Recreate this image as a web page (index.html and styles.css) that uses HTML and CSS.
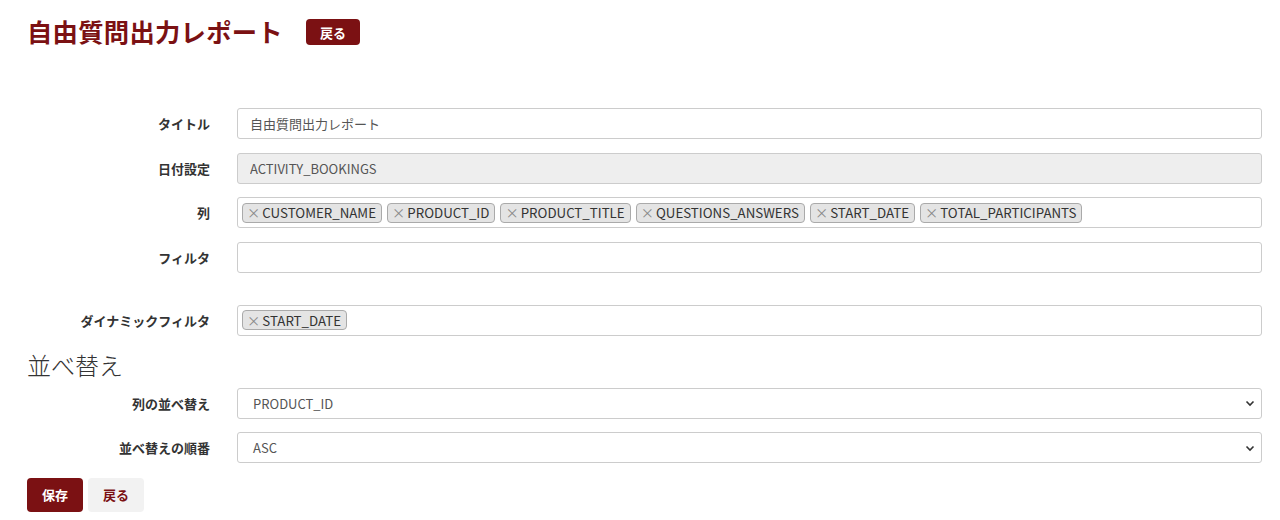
FILE: index.html
```html
<!DOCTYPE html>
<html>
  <head>
    <meta charset="utf-8">
    <title>自由質問出力レポート</title>
    <link rel="stylesheet" href="styles.css">
  </head>
  <body>
    <div class="page">
      <div class="page-header">
        <h1>自由質問出力レポート</h1>
        <a class="btn btn-primary btn-sm" href="#">戻る</a>
      </div>

      <form class="report-form">
        <div class="form-row">
          <label>タイトル</label>
          <input type="text" class="form-control" value="自由質問出力レポート">
        </div>
        <div class="form-row">
          <label>日付設定</label>
          <input type="text" class="form-control" value="ACTIVITY_BOOKINGS" disabled>
        </div>
        <div class="form-row">
          <label>列</label>
          <div class="form-control tag-box">
            <span class="tag"><span class="tag-x">×</span>CUSTOMER_NAME</span>
            <span class="tag"><span class="tag-x">×</span>PRODUCT_ID</span>
            <span class="tag"><span class="tag-x">×</span>PRODUCT_TITLE</span>
            <span class="tag"><span class="tag-x">×</span>QUESTIONS_ANSWERS</span>
            <span class="tag"><span class="tag-x">×</span>START_DATE</span>
            <span class="tag"><span class="tag-x">×</span>TOTAL_PARTICIPANTS</span>
          </div>
        </div>
        <div class="form-row">
          <label>フィルタ</label>
          <div class="form-control tag-box"></div>
        </div>
        <div class="form-row spaced">
          <label>ダイナミックフィルタ</label>
          <div class="form-control tag-box">
            <span class="tag"><span class="tag-x">×</span>START_DATE</span>
          </div>
        </div>

        <h2>並べ替え</h2>

        <div class="form-row">
          <label>列の並べ替え</label>
          <div class="form-control select-box">
            <span>PRODUCT_ID</span>
            <svg width="10" height="8" viewBox="0 0 10 8"><path d="M1.5 2.5 5 6 8.5 2.5" fill="none" stroke="#333" stroke-width="1.6"/></svg>
          </div>
        </div>
        <div class="form-row">
          <label>並べ替えの順番</label>
          <div class="form-control select-box">
            <span>ASC</span>
            <svg width="10" height="8" viewBox="0 0 10 8"><path d="M1.5 2.5 5 6 8.5 2.5" fill="none" stroke="#333" stroke-width="1.6"/></svg>
          </div>
        </div>

        <div class="actions">
          <button type="button" class="btn btn-primary">保存</button>
          <button type="button" class="btn btn-light">戻る</button>
        </div>
      </form>
    </div>
  </body>
</html>
```

FILE: styles.css
```css
body {
  margin: 0;
  font-family: "Noto Sans CJK JP", "Open Sans", sans-serif;
  font-size: 13px;
  color: #333;
  background: #fff;
}
.page {
  padding: 14px 18px 0 27px;
}
.page-header {
  display: flex;
  align-items: center;
  gap: 23px;
  height: 34px;
}
h1 {
  margin: 0;
  font-size: 25.3px;
  font-weight: bold;
  color: #7b1113;
  letter-spacing: 0.3px;
}
.btn {
  display: inline-flex;
  align-items: center;
  justify-content: center;
  border: none;
  border-radius: 4px;
  font-family: inherit;
  font-weight: bold;
  text-decoration: none;
  cursor: pointer;
}
.btn-primary {
  background: #7b1113;
  color: #fff;
}
.btn-light {
  background: #f2f2f2;
  color: #7b1113;
}
.btn-sm {
  width: 54px;
  height: 26px;
  font-size: 13px;
  margin-top: 2px;
}
.report-form {
  margin-top: 60px;
}
.form-row {
  display: grid;
  grid-template-columns: 183px 1fr;
  column-gap: 27px;
  align-items: center;
  margin-bottom: 13.5px;
}
.form-row.spaced {
  margin-top: 32px;
  margin-bottom: 0;
}
.form-row label {
  text-align: right;
  font-weight: bold;
  color: #333;
}
.form-control {
  box-sizing: border-box;
  height: 31px;
  border: 1px solid #ccc;
  border-radius: 3px;
  padding: 0 12px;
  font-family: inherit;
  font-size: 13px;
  color: #555;
  background: #fff;
  width: 100%;
}
.form-control:disabled {
  background: #eee;
  color: #555;
}
.tag-box {
  display: flex;
  align-items: center;
  gap: 5px;
  padding: 0 4px;
}
.tag {
  display: inline-flex;
  align-items: center;
  height: 20px;
  box-sizing: border-box;
  padding: 0 5px 0 4px;
  background: #e4e4e4;
  border: 1px solid #aaa;
  border-radius: 4px;
  font-size: 13.3px;
  color: #333;
}
.tag-x {
  color: #888;
  margin-right: 2px;
}
h2 {
  margin: 11px 0 6px;
  font-size: 24px;
  font-weight: 300;
  color: #333;
}
.select-box {
  display: flex;
  align-items: center;
  justify-content: space-between;
  padding: 0 6px 0 15px;
}
.actions {
  display: flex;
  gap: 5px;
  margin-top: 14.5px;
}
.actions .btn {
  width: 56px;
  height: 34px;
  font-size: 13px;
}
```
